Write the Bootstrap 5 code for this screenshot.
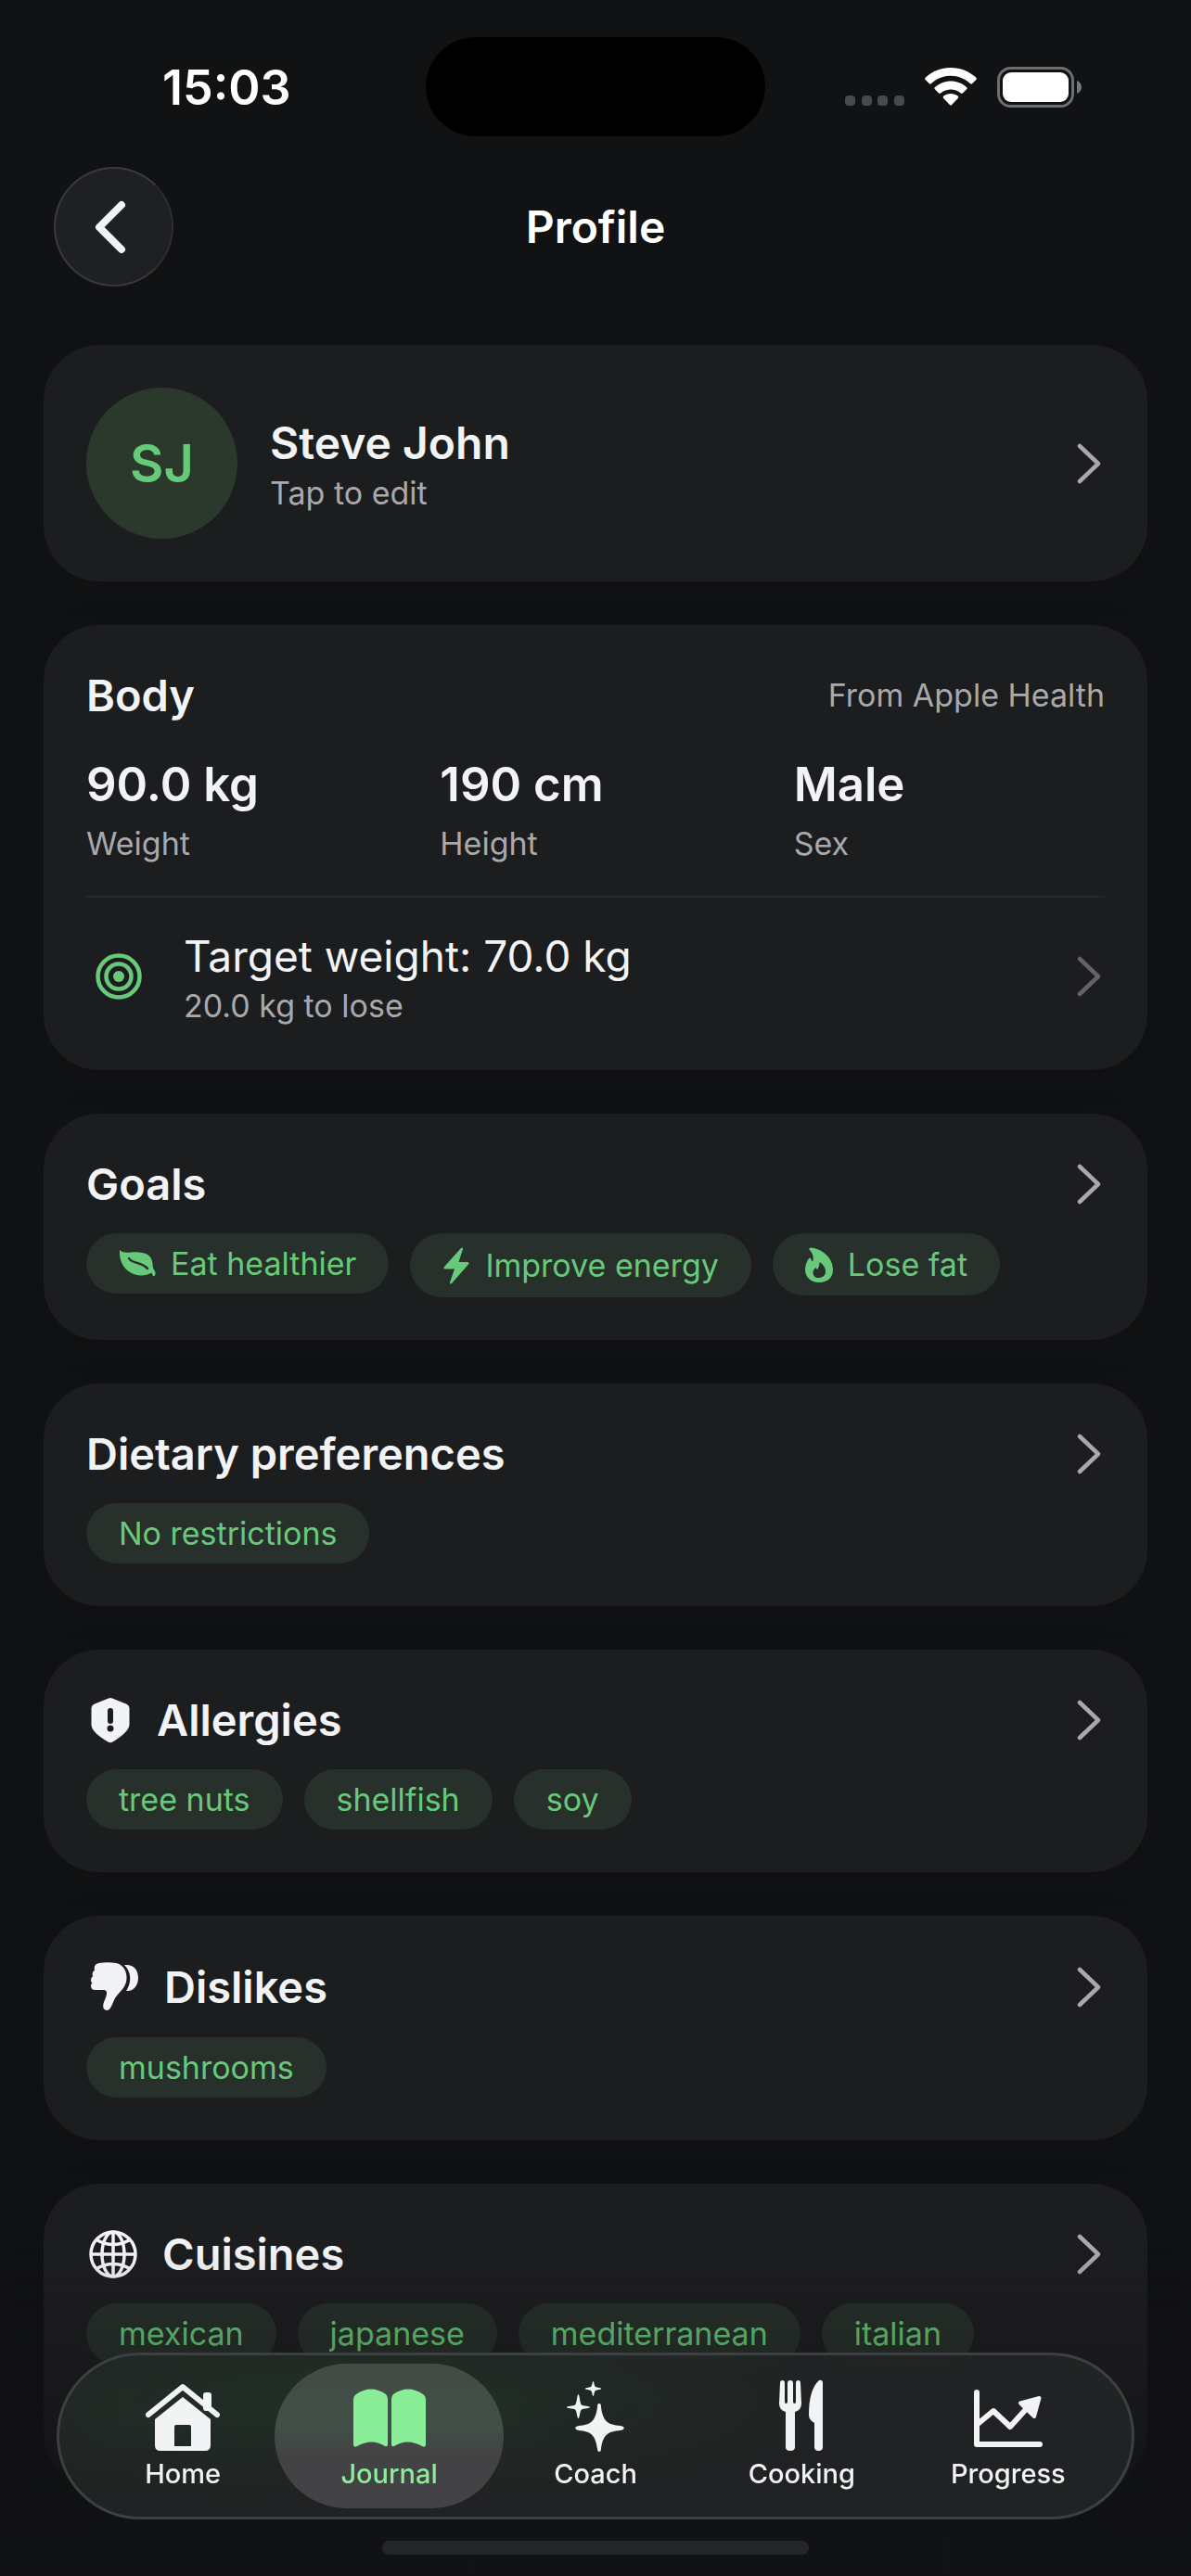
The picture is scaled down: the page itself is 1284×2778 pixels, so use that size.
<!DOCTYPE html>
<html lang="en">
<head>
<meta charset="utf-8">
<meta name="viewport" content="width=device-width, initial-scale=1">
<title>Profile</title>
<link href="https://cdn.jsdelivr.net/npm/bootstrap@5.3.0/dist/css/bootstrap.min.css" rel="stylesheet">
<style>
  :root { --bg: #111214; --panel: #1c1d1f; --ink: #f2f3f5; --dim: #a9a9ac; --leaf: #69c97a; --chip: #27302a; }
  body { background: var(--bg); color: var(--ink); font-family: Inter, "Liberation Sans", sans-serif; font-size: 34px; line-height: 46px; }
  svg { display: block; flex: none; }
  a, a:hover { color: inherit; text-decoration: none; }

  .status-bar { display: grid; grid-template-columns: 1fr 366px 1fr; align-items: center; padding-top: 40px; }
  .status-bar .island { height: 107px; border-radius: 54px; background: #000; }
  .clock { font-size: 52px; font-weight: 600; color: #fff; padding: 2px 0 0 175px; }
  .indicators { padding-right: 117px; gap: 22px; }

  .page-head { display: grid; grid-template-columns: 1fr auto 1fr; align-items: center; padding: 33px 58px 0; }
  .back-btn { width: 129px; height: 129px; border-radius: 50%; background: #1f2022; border: 2px solid #3a3b3d; border-right-color: #2d2e30; padding: 0 6px 0 0; }
  .page-head h1 { font-size: 48px; line-height: 60px; font-weight: 600; color: #fff; }

  .list-area { padding: 63px 47px 0; gap: 47px; overflow-y: auto; scrollbar-width: none; }
  .list-area::-webkit-scrollbar { display: none; }
  .panel { flex: none; background: var(--panel); border-radius: 60px; padding: 46px; box-shadow: 0 8px 40px rgba(0, 0, 0, .1); }
  .panel h2 { font-size: 47px; line-height: 60px; font-weight: 600; margin: 0; }
  .person { font-size: 48px; line-height: 62px; font-weight: 600; }
  .target { font-size: 46px; line-height: 62px; }
  .row-text { margin-left: 35px; padding-top: 2px; }
  .title-row { min-height: 60px; margin-bottom: 23px; }
  .dim { color: var(--dim); }
  .avatar { width: 163px; height: 163px; background: #2b392d; color: var(--leaf); font-size: 56px; font-weight: 600; }
  .stats { display: grid; grid-template-columns: repeat(3, 1fr); gap: 46px; padding: 11px 0 33px; border-bottom: 2px solid #27282a; margin: 0 0 30px; }
  .stats dt { font-weight: 400; }
  .stats dd { font-size: 51px; line-height: 64px; font-weight: 600; margin: 0 0 9px; }
  .chips { gap: 23px; align-items: flex-start; }
  .chip { min-height: 65px; padding: 0 35px; border-radius: 35px; background: var(--chip); color: var(--leaf); display: flex; align-items: center; }
  .chip.mid { min-height: 67px; }
  .chip.tall { min-height: 69px; }

  .fade-out { height: 440px; pointer-events: none; background: linear-gradient(rgba(17,18,20,0) 20%, rgba(17,18,20,.22) 42%, rgba(17,18,20,.5) 62%, rgba(17,18,20,.96) 88%, rgba(17,18,20,.96)); }
  .dock { padding: 0 61px; }
  .tabs { height: 180px; border-radius: 90px; padding: 9px 22px; background: radial-gradient(ellipse 46% 62% at 26% 28%, rgba(32,50,38,.8), rgba(32,50,38,0)), rgba(35,36,38,.88); backdrop-filter: blur(4px); border: 3px solid #3c4041; }
  .tab { flex: 1 1 0; position: relative; font-size: 29px; line-height: 38px; font-weight: 500; padding-bottom: 2px; }
  .tab svg { height: 80px; margin-bottom: 3px; }
  .tab > * { position: relative; }
  .tab.active { color: #8aee99; }
  .tab.active::before { content: ""; position: absolute; inset: 0 -12px; border-radius: 80px; background: linear-gradient(#424a46, #415046 42%, #434345 62%); }
  .home-bar { width: 460px; height: 15px; border-radius: 8px; background: #252628; margin: 23px auto; }
</style>
<script src="https://cdn.jsdelivr.net/npm/bootstrap@5.3.0/dist/js/bootstrap.bundle.min.js"></script>
</head>
<body>
<svg width="0" height="0" class="position-absolute" aria-hidden="true">
  <symbol id="chev" viewBox="0 0 30 44"><path d="M3 3 L23 22 L3 41" fill="none" stroke="currentColor" stroke-width="4.500" stroke-linecap="round" stroke-linejoin="round"/></symbol>
</svg>
<div class="vh-100 d-flex flex-column overflow-hidden">
  <div class="status-bar">
    <div class="clock">15:03</div>
    <div class="island"></div>
    <div class="indicators d-flex justify-content-end align-items-center">
      <svg width="64" height="42" viewBox="0 0 64 42" fill="#48494b"><rect x="0" y="30" width="11" height="11" rx="4"/><rect x="18" y="30" width="11" height="11" rx="4"/><rect x="35" y="30" width="11" height="11" rx="4"/><rect x="53" y="30" width="11" height="11" rx="4"/></svg>
      <svg width="56" height="42" viewBox="0 0 56 42" fill="#fff"><path d="M28 0C17.500 0 8 4 .8 10.600c-.8.8-.8 1.700-.1 2.400l4 4c.7.700 1.600.700 2.300 0C12.600 11.800 20 8.700 28 8.700s15.400 3.100 21 8.300c.7.700 1.600.700 2.300 0l4-4c.7-.7.700-1.600-.1-2.400C48 4 38.500 0 28 0z"/><path d="M28 14.500c-6.500 0-12.400 2.400-17 6.400-.8.700-.8 1.700-.1 2.400l4 4c.7.700 1.500.700 2.300.1 3-2.500 6.700-4 10.800-4s7.800 1.500 10.800 4c.8.600 1.600.6 2.300-.1l4-4c.7-.7.700-1.700-.1-2.400-4.600-4-10.500-6.400-17-6.400z"/><path d="M28 28c-3 0-5.600 1-7.700 2.600-.8.600-.8 1.600-.1 2.300l6.700 7c.7.700 1.500.700 2.200 0l6.700-7c.7-.7.700-1.700-.1-2.300C33.600 29 31 28 28 28z"/></svg>
      <svg width="92" height="44" viewBox="0 0 92 44"><rect x="1.500" y="1.500" width="80" height="41" rx="13" fill="none" stroke="#6d6e70" stroke-width="3"/><rect x="6" y="6" width="71" height="32" rx="9" fill="#fff"/><path d="M86 15c3 1 5 4 5 7s-2 6-5 7z" fill="#77787a"/></svg>
    </div>
  </div>
  <header class="page-head">
    <button class="back-btn d-flex align-items-center justify-content-center text-white" type="button" aria-label="Back"><svg width="40" height="60" viewBox="0 0 40 60"><path d="M31 6 L7 30 L31 54" fill="none" stroke="#f2f3f5" stroke-width="8" stroke-linecap="round" stroke-linejoin="round"/></svg></button>
    <h1 class="m-0">Profile</h1>
    <span></span>
  </header>

  <main class="list-area d-flex flex-column flex-fill">
    <a href="#edit" class="panel d-flex align-items-center">
      <span class="avatar rounded-circle d-flex align-items-center justify-content-center">SJ</span>
      <span class="row-text me-auto"><span class="person d-block">Steve John</span><span class="dim d-block">Tap to edit</span></span>
      <svg class="dim" width="30" height="44"><use href="#chev"/></svg>
    </a>

    <section class="panel">
      <div class="title-row d-flex align-items-center justify-content-between">
        <h2>Body</h2><span class="dim">From Apple Health</span>
      </div>
      <dl class="stats">
        <div class="d-flex flex-column-reverse"><dt class="dim">Weight</dt><dd>90.0 kg</dd></div>
        <div class="d-flex flex-column-reverse"><dt class="dim">Height</dt><dd>190 cm</dd></div>
        <div class="d-flex flex-column-reverse"><dt class="dim">Sex</dt><dd>Male</dd></div>
      </dl>
      <a href="#target" class="d-flex align-items-center">
        <svg width="70" height="50" viewBox="0 0 70 50" fill="none" stroke="#69c97a" stroke-width="4.500"><circle cx="35" cy="25" r="22.500"/><circle cx="35" cy="25" r="13.500"/><circle cx="35" cy="25" r="6" fill="#69c97a" stroke="none"/></svg>
        <span class="row-text me-auto"><span class="target d-block">Target weight: 70.0 kg</span><span class="dim d-block">20.0 kg to lose</span></span>
        <svg class="dim opacity-50" width="30" height="44"><use href="#chev"/></svg>
      </a>
    </section>

    <section class="panel">
      <a href="#goals" class="title-row d-flex align-items-center justify-content-between"><h2>Goals</h2><svg class="dim" width="30" height="44"><use href="#chev"/></svg></a>
      <div class="chips d-flex flex-wrap">
        <span class="chip"><svg class="me-3" width="40" height="32" viewBox="0 0 40 32"><path d="M1 1c3 3 7 3 13 2.500C26 2.500 36 5 36.500 16c0 3 .5 5 2.500 8 1 2 .5 4-.5 5-1.500 1-2-1-3-3.500-5 3-12 4-18 2C6 24 0 13 1 1z" fill="#69c97a"/><path d="M11 10c3 6 12 3 20 11" fill="none" stroke="#27302a" stroke-width="2.500" stroke-linecap="round"/></svg>Eat healthier</span>
        <span class="chip tall"><svg class="me-3" width="30" height="40" viewBox="0 0 30 40" fill="#69c97a"><path d="M20 1 2 21c-1 1-.5 2.500 1 2.500h10L8 38c-.5 1.500 1 2 2 1l18-20.500c1-1 .5-2.500-1-2.500H17.500L22 2c.5-1.500-1-2-2-1z"/></svg>Improve energy</span>
        <span class="chip mid"><svg class="me-3" width="30" height="38" viewBox="0 0 30 38" fill="#69c97a"><path fill-rule="evenodd" d="M6 .5C16 1 30 10 30 24c0 9-6 14-15 14S0 32 0 24c0-5 2-9 4-12 .7-1 2-.6 2.300.5.3 1.500.8 2.500 1.700 3C10 12 8 6 4.500 2.500 4 1.500 4.500.4 6 .5zM14 33c5 0 8-2.500 8-7 0-4-2.500-7.500-6.500-10C16 19 14 22 13.500 24c-1-.5-1.500-1-2-2-2 2-3 3-3 5.500 0 3.500 2.500 5.500 5.500 5.500z"/></svg>Lose fat</span>
      </div>
    </section>

    <section class="panel">
      <a href="#diet" class="title-row d-flex align-items-center justify-content-between"><h2>Dietary preferences</h2><svg class="dim" width="30" height="44"><use href="#chev"/></svg></a>
      <div class="chips d-flex flex-wrap"><span class="chip">No restrictions</span></div>
    </section>

    <section class="panel">
      <a href="#allergies" class="title-row d-flex align-items-center">
        <svg width="52" height="50" viewBox="0 0 52 50"><path d="M24 1.500q2-1 4 0l15 6q3.500 1.500 3.500 5v17q0 8-18 19-2.500 1.500-5 0Q5.500 38 5.500 30V12.500q0-3.500 3.500-5z" fill="#f2f3f5"/><rect x="23" y="12" width="6" height="17" rx="3" fill="#1c1d1f"/><circle cx="26" cy="34" r="3.500" fill="#1c1d1f"/></svg>
        <h2 class="ms-4 me-auto">Allergies</h2><svg class="dim" width="30" height="44"><use href="#chev"/></svg></a>
      <div class="chips d-flex flex-wrap"><span class="chip">tree nuts</span><span class="chip">shellfish</span><span class="chip">soy</span></div>
    </section>

    <section class="panel">
      <a href="#dislikes" class="title-row d-flex align-items-center">
        <svg width="60" height="62" viewBox="0 0 60 62" fill="#f2f3f5"><path d="M14 5q9-1.500 18 0c8 1.500 12 9 11.500 17-.5 10-9 15-12.500 21-2 4-3 7-5 10.500-1.500 3-6 3.500-7.500 0-1-3 .5-7 2-10 1.500-4 3-9-1-9.500H10q-5 0-5-4.500 0-2 1.500-3Q4.500 25 5 22.500q.3-2 2-3Q6 17.500 7 15q.6-1.500 2-2-.5-2 0-4.500Q10 5.500 14 5z"/><path d="M41 7c10-1 15 5 15 14 0 8-5 15-13 14 5-7 7-19-2-28z"/></svg>
        <h2 class="ms-4 me-auto">Dislikes</h2><svg class="dim" width="30" height="44"><use href="#chev"/></svg></a>
      <div class="chips d-flex flex-wrap"><span class="chip">mushrooms</span></div>
    </section>

    <section class="panel">
      <a href="#cuisines" class="title-row d-flex align-items-center">
        <svg width="58" height="52" viewBox="0 0 58 52" fill="none" stroke="#f2f3f5" stroke-width="3.500"><circle cx="29" cy="26" r="24"/><ellipse cx="29" cy="26" rx="12" ry="24"/><path d="M29 2v48M5 26h48M11 10.500q18 10 36 0M11 41.500q18-10 36 0"/></svg>
        <h2 class="ms-4 me-auto">Cuisines</h2><svg class="dim" width="30" height="44"><use href="#chev"/></svg></a>
      <div class="chips d-flex flex-wrap"><span class="chip">mexican</span><span class="chip">japanese</span><span class="chip">mediterranean</span><span class="chip">italian</span><span class="chip">indian</span><span class="chip">middle eastern</span></div>
    </section>
    <section class="panel"><div class="title-row"></div></section>
  </main>
</div>

<div class="fade-out fixed-bottom"></div>
<div class="fixed-bottom dock">
  <nav class="tabs d-flex" aria-label="Main">
    <a href="#home" class="tab d-flex flex-column align-items-center justify-content-center"><svg width="80" height="80" viewBox="0 0 80 80" fill="#f2f3f5"><path d="M3 38 40 8l37 30" fill="none" stroke="#f2f3f5" stroke-width="6" stroke-linecap="round" stroke-linejoin="round"/><rect x="62" y="14" width="9" height="20" rx="3"/><path fill-rule="evenodd" d="M40 19 70 43v28q0 6-6 6H16q-6 0-6-6V43zM33 49q-2 0-2 2v21h18V51q0-2-2-2z"/></svg><span>Home</span></a>
    <a href="#journal" class="tab active d-flex flex-column align-items-center justify-content-center" aria-current="page"><svg width="78" height="80" viewBox="0 0 78 80" fill="#8aee99"><path d="M0 22q0-4 3-6 16-11 32 0 2 2 2 5v49q0 3-3 2-14-9-30 0-4 2-4-2z"/><path d="M41 21q0-3 2-5 16-11 32 0 3 2 3 6v48q0 4-4 2-16-9-30 0-3 1-3-2z"/></svg><span>Journal</span></a>
    <a href="#coach" class="tab d-flex flex-column align-items-center justify-content-center"><svg width="64" height="80" viewBox="0 0 64 80" fill="#f2f3f5"><path d="M36 26c2 0 2 2 2 4 2 15 7 19 21 20 5 1 5 4 0 5-14 1-19 5-21 20 0 4-4 4-4 0-2-15-7-19-20-20-5-1-5-4 0-5 13-1 18-5 20-20 0-2 0-4 2-4z"/><path d="M13.500 16c1.500 0 1.500 10 3.500 11.500s9 1 9 2.500-7 1-9 2.500-2 9.500-3.500 9.500-1.500-8-3.500-9.500S1 31.500 1 30s7-1 9-2.500S12 16 13.500 16z"/><path d="M29.500 2c1 0 1 5 2.500 6s6 .8 6 2-4.500 1-6 2-1.500 6-2.500 6-1-5-2.500-6-6-.8-6-2 4.500-1 6-2 1.500-6 2.500-6z"/></svg><span>Coach</span></a>
    <a href="#cooking" class="tab d-flex flex-column align-items-center justify-content-center"><svg width="48" height="80" viewBox="0 0 48 80" fill="#f2f3f5"><path d="M1 4q0-3 2.500-3T6 4v20q0 2 1.500 2T9 24V4q0-3 3-3t3 3v20q0 2 1.500 2t1.500-2V4q0-3 2.500-3T23 4l1 22q0 7-7 9v38q0 4-5 4t-5-4V35q-7-2-7-9z"/><path d="M43 1q4-1 4 3v69q0 4-4.500 4T38 73V47q-6-3-6-9 0-27 11-37z"/></svg><span>Cooking</span></a>
    <a href="#progress" class="tab d-flex flex-column align-items-center justify-content-center"><svg width="74" height="80" viewBox="0 0 74 80" fill="none" stroke="#f2f3f5" stroke-width="6" stroke-linecap="round" stroke-linejoin="round"><path d="M3 14v56h68"/><path d="M4 48 21 34l18 17 19-21"/><path d="M50 25.500 70.500 20 65 40z" fill="#f2f3f5" stroke-width="4"/></svg><span>Progress</span></a>
  </nav>
  <div class="home-bar"></div>
</div>
</body>
</html>
